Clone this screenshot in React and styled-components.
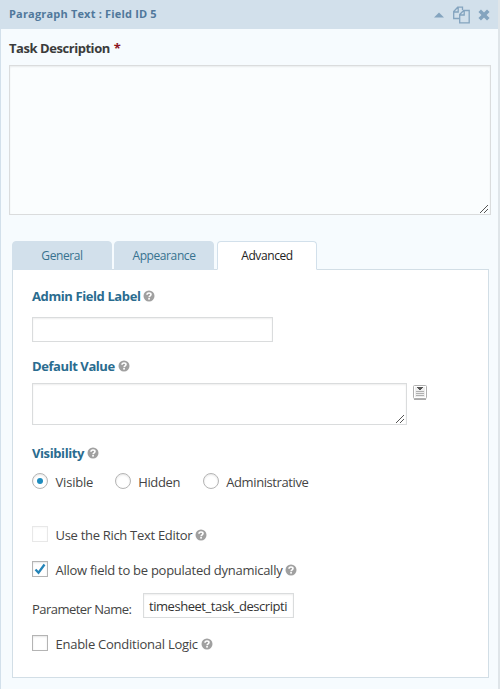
import React from "react";
import styled, { createGlobalStyle } from "styled-components";

const GlobalStyle = createGlobalStyle`
  *, *::before, *::after { box-sizing: border-box; }
  body { margin: 0; background: #fff; font-family: "Open Sans", "Noto Sans", sans-serif; font-size: 13px; color: #444; }
`;

const FieldCard = styled.section`
  width: 500px;
  height: 689px;
  overflow: hidden;
  background: #f6fbfe;
  border-left: 1px solid #d2e0eb;
  border-right: 2px solid #dfe5e9;
`;

const Header = styled.header`
  height: 29px;
  margin: 0 0 0 -1px;
  padding: 0 8px 0 9px;
  display: flex;
  align-items: center;
  justify-content: space-between;
  background: #d2e0eb;
`;

const Text = styled.span`
  white-space: nowrap;
  line-height: 20px;
  letter-spacing: ${(p) => p.$track || 0}px;
`;

const Title = styled(Text)`
  font-size: 11px;
  font-weight: 700;
  color: #50789b;
  padding-bottom: 2px;
`;

const Actions = styled.div`
  display: flex;
  align-items: center;
  gap: 8px;
`;

const FieldBody = styled.div`
  padding: 9px 7px 0 8px;
`;

const FieldLabel = styled.div`
  height: 27px;
  display: flex;
  gap: 4px;
  font-weight: 700;
  color: #3b3b3b;
`;

const Required = styled.span`
  color: #8c1523;
  line-height: 20px;
`;

const TextBox = styled.div`
  position: relative;
  flex: none;
  width: ${(p) => p.$w}px;
  height: ${(p) => p.$h}px;
  border: 1px solid #dadcdd;
  background: ${(p) => p.$bg || "#fff"};
  box-shadow: inset 0 1px 2px rgba(0, 0, 0, 0.07);
  display: flex;
  align-items: center;
  padding: 0 5px;
  color: #333;
`;

const Grip = styled.svg`
  position: absolute;
  right: 1px;
  bottom: 1px;
`;

const Tabs = styled.nav`
  display: flex;
  margin: 26px 0 -1px 3px;
  position: relative;
`;

const Tab = styled.div`
  width: 100px;
  height: 29px;
  margin-right: ${(p) => p.$gap}px;
  padding-top: 4px;
  font-size: 12px;
  border: 1px solid #d2e0eb;
  border-bottom-color: ${(p) => (p.$active ? "#fff" : "#d2e0eb")};
  border-radius: 4px 4px 0 0;
  background: ${(p) => (p.$active ? "#fff" : "#d2e0eb")};
  color: ${(p) => (p.$active ? "#222" : "#37728f")};
  text-align: center;
`;

const Panel = styled.div`
  width: 477px;
  height: 409px;
  margin-left: 3px;
  padding: 16px 19px 0;
  border: 1px solid #d2dee6;
  background: #fff;
`;

const Row = styled.div`
  display: flex;
  align-items: flex-start;
  height: ${(p) => p.$h}px;
`;

const Heading = styled(Text)`
  font-weight: 700;
  color: #2a6c8f;
`;

const HelpIcon = styled.svg`
  flex: none;
  margin: ${(p) => p.$top}px 0 0 3px;
`;

const Mark = styled.span`
  flex: none;
  width: 16px;
  height: 16px;
  margin-right: 7.5px;
  border: 1px solid ${(p) => (p.$faint ? "#e8e8e8" : "#b4b4b4")};
  border-radius: ${(p) => (p.$round ? "50%" : "0")};
  background: #fff;
  box-shadow: inset 0 1px 2px rgba(0, 0, 0, ${(p) => (p.$faint ? 0.03 : 0.1)});
  display: flex;
  align-items: center;
  justify-content: center;
`;

const Dot = styled.span`
  width: 6px;
  height: 6px;
  border-radius: 50%;
  background: #1e8cbe;
`;

const Choice = styled.label`
  display: flex;
  margin-right: ${(p) => p.$gap || 0}px;
`;

const Label = styled(Text)`
  margin-top: -1px;
`;

const ParameterLabel = styled(Text)`
  width: 111px;
  margin-top: 6px;
`;

const MergeIcon = styled.svg`
  margin: 1px 0 0 5px;
`;

const Help = ({ top = 3 }) => (
  <HelpIcon $top={top} width="12" height="12" viewBox="0 0 12 12">
    <circle cx="6" cy="6" r="5.5" fill="#a0a0a0" />
    <path d="M4 4.7C4 2.4 8 2.5 8 4.6C8 5.8 6.1 5.8 6.1 7.2" fill="none" stroke="#fff" strokeWidth="1.6" />
    <rect x="5.2" y="8" width="1.7" height="1.6" fill="#fff" />
  </HelpIcon>
);

const ResizeGrip = () => (
  <Grip width="9" height="9" viewBox="0 0 9 9" shapeRendering="crispEdges">
    <path d="M0 8h1v1H0zM1 7h1v1H1zM2 6h1v1H2zM3 5h1v1H3zM4 4h1v1H4zM5 3h1v1H5zM6 2h1v1H6zM7 1h1v1H7zM4 8h1v1H4zM5 7h1v1H5zM6 6h1v1H6zM7 5h1v1H7z" fill="#555" />
  </Grip>
);

export default function App() {
  return (
    <>
      <GlobalStyle />
      <FieldCard>
        <Header>
          <Title $track={0.18}>Paragraph Text : Field ID 5</Title>
          <Actions>
            <svg width="10" height="6" viewBox="0 0 10 6"><path d="M0 5.5L5 0.5L10 5.5z" fill="#84a4bf" /></svg>
            <svg width="18" height="18" viewBox="0 0 18 18" fill="none" stroke="#84a4bf" strokeWidth="1.3">
              <path d="M8 12.5H1.7V5.5L5.7 1.2H10.5V4M1.7 6H6.2V1.2" />
              <path d="M7.7 8.5L11.7 4.5H17.2V16.8H7.7zM7.7 9H12.2V4.5" fill="#d2e0eb" />
            </svg>
            <svg width="12" height="12" viewBox="0 0 12 12"><path d="M1.7 1.7L10.3 10.3M10.3 1.7L1.7 10.3" stroke="#84a4bf" strokeWidth="3.6" /></svg>
          </Actions>
        </Header>
        <FieldBody>
          <FieldLabel>
            <Text $track={-0.45}>Task Description</Text>
            <Required>*</Required>
          </FieldLabel>
          <TextBox $w={482} $h={150} $bg="#fafdfe"><ResizeGrip /></TextBox>
          <Tabs>
            <Tab $gap={2}><Text $track={-0.4}>General</Text></Tab>
            <Tab $gap={3}><Text $track={-0.4}>Appearance</Text></Tab>
            <Tab $active><Text $track={-0.4}>Advanced</Text></Tab>
          </Tabs>
          <Panel>
            <Row $h={31}><Heading $track={-0.4}>Admin Field Label</Heading><Help top={4} /></Row>
            <Row $h={39}><TextBox $w={241} $h={25} /></Row>
            <Row $h={27}><Heading $track={-0.42}>Default Value</Heading><Help top={4} /></Row>
            <Row $h={60}>
              <TextBox $w={375} $h={42}><ResizeGrip /></TextBox>
              <MergeIcon width="16" height="17" viewBox="0 0 16 17">
                <rect x="2" y="14" width="12" height="2" fill="#aaa" />
                <rect x="1.5" y="1.5" width="13" height="13" rx="1" fill="#fff" stroke="#b0b0b0" />
                <rect x="3" y="3" width="10" height="10" fill="#eee" />
                <path d="M5 3h6v1h-1v1H9v1H7V5H6V4H5z" fill="#555" />
                <path d="M4 7.5h8M4 9.5h8M4 11.5h8" stroke="#b0b0b0" />
              </MergeIcon>
            </Row>
            <Row $h={30}><Heading $track={-0.4}>Visibility</Heading><Help top={4} /></Row>
            <Row $h={53}>
              <Choice $gap={21.5}><Mark $round><Dot /></Mark><Label $track={-0.2}>Visible</Label></Choice>
              <Choice $gap={22.5}><Mark $round /><Label $track={-0.33}>Hidden</Label></Choice>
              <Choice><Mark $round /><Label $track={-0.4}>Administrative</Label></Choice>
            </Row>
            <Row $h={35}><Mark $faint /><Label $track={-0.3}>Use the Rich Text Editor</Label><Help /></Row>
            <Row $h={32}>
              <Mark>
                <svg width="14" height="14" viewBox="0 0 14 14"><path d="M2.5 7.5L5.5 10.7L11.5 2.5" fill="none" stroke="#2484b8" strokeWidth="2.3" /></svg>
              </Mark>
              <Label $track={-0.26}>Allow field to be populated dynamically</Label><Help />
            </Row>
            <Row $h={42}>
              <ParameterLabel $track={-0.53}>Parameter Name:</ParameterLabel>
              <TextBox $w={151} $h={25}><Text $track={-0.46}>timesheet_task_descripti</Text></TextBox>
            </Row>
            <Row $h={20}><Mark /><Label $track={-0.25}>Enable Conditional Logic</Label><Help /></Row>
          </Panel>
        </FieldBody>
      </FieldCard>
    </>
  );
}
